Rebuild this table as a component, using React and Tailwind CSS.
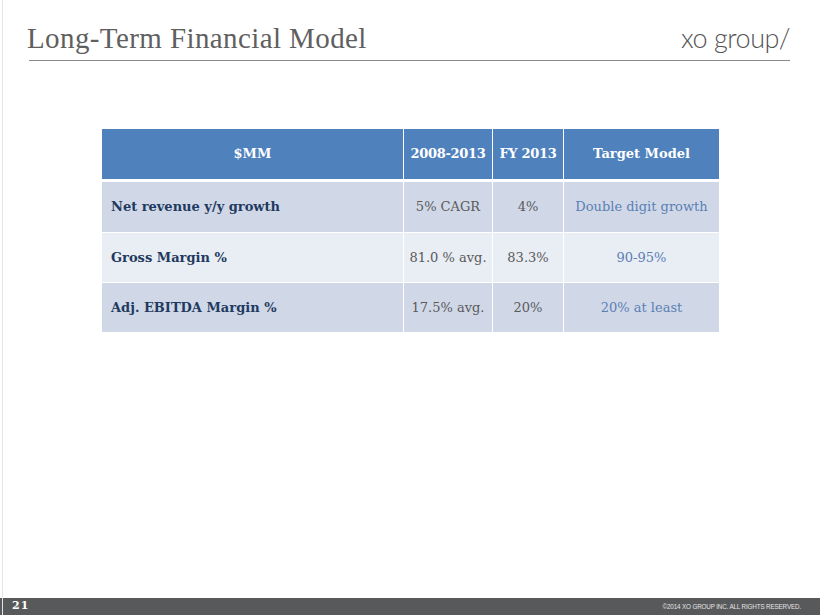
import React from 'react';

const rows = [
  { label: 'Net revenue y/y growth', a: '5% CAGR', b: '4%', c: 'Double digit growth', bg: 'bg-[#d0d8e8]' },
  { label: 'Gross Margin %', a: '81.0 % avg.', b: '83.3%', c: '90-95%', bg: 'bg-[#e9edf4]' },
  { label: 'Adj. EBITDA Margin %', a: '17.5% avg.', b: '20%', c: '20% at least', bg: 'bg-[#d0d8e8]' },
];

const serif = "font-['Georgia','DejaVu_Serif','Liberation_Serif',serif]";

const App = () => {
  return (
    <div className="w-[820px] h-[615px] bg-white flex flex-col overflow-hidden relative">
      {/* left edge line */}
      <div className="absolute left-[2px] top-0 bottom-0 w-px bg-[#e4e4e4]" />

      {/* Header */}
      <div className="pl-[27px] pr-[30px] pt-[23px]">
        <div className="flex items-end justify-between h-[30px]">
          <h1 className="font-['Liberation_Serif',serif] text-[29px] leading-none text-[#5f5f5f] tracking-[0.4px]">
            Long-Term Financial Model
          </h1>
          <span className="font-['Lato','Noto_Sans',sans-serif] font-light text-[27px] leading-none text-[#555] tracking-[-0.5px] mb-[2px]">
            xo group/
          </span>
        </div>
        <div className="mt-[7px] ml-[2px] h-px bg-[#8a8a8a]" />
      </div>

      {/* Table */}
      <div className="flex-1 pt-[68px] pl-[102px]">
        <div className={`w-[617px] ${serif} text-[13px]`}>
          <div className="flex h-[50px] bg-[#4f81bd] text-white font-bold">
            <div className="w-[302px] flex items-center justify-center border-r border-white">$MM</div>
            <div className="w-[89px] flex items-center justify-center border-r border-white tracking-[-0.3px]">2008-2013</div>
            <div className="w-[71px] flex items-center justify-center border-r border-white tracking-[-0.3px]">FY 2013</div>
            <div className="flex-1 flex items-center justify-center">Target Model</div>
          </div>
          <div className="h-[3px]" />
          {rows.map((r, i) => (
            <div key={i} className={`flex h-[50px] ${r.bg} ${i > 0 ? 'border-t border-white' : ''}`}>
              <div className="w-[302px] flex items-center pl-[9px] border-r border-white font-bold text-[#1f3a60]">{r.label}</div>
              <div className="w-[89px] flex items-center justify-center border-r border-white text-[#5a5a5a]">{r.a}</div>
              <div className="w-[71px] flex items-center justify-center border-r border-white text-[#5a5a5a]">{r.b}</div>
              <div className="flex-1 flex items-center justify-center text-[#5b7fb4]">{r.c}</div>
            </div>
          ))}
        </div>
      </div>

      {/* Footer */}
      <div className="h-[17px] bg-[#58595b] flex items-center justify-between pl-[12px] pr-[19px]">
        <span className={`${serif} text-[11px] font-bold text-white tracking-[1px]`}>21</span>
        <span className="font-['Liberation_Sans',sans-serif] text-[6.3px] text-[#e4e4e4] tracking-[-0.15px]">
          ©2014 XO GROUP INC. ALL RIGHTS RESERVED.
        </span>
      </div>
    </div>
  );
};

export default App;
